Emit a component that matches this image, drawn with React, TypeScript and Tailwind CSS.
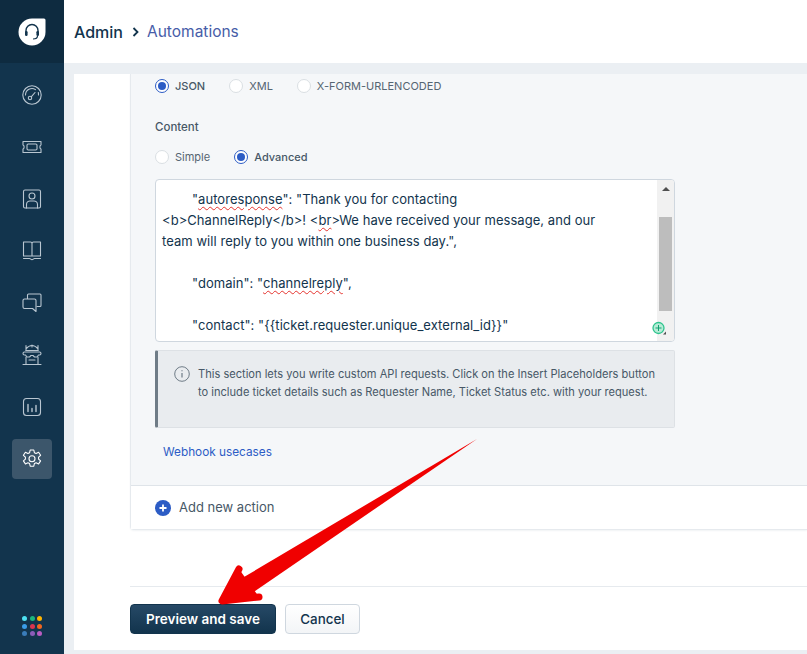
import React from "react";

const font = { fontFamily: "Inter, 'Noto Sans', sans-serif" };

function Icon({ children, light }: { children: React.ReactNode; light?: boolean }) {
  return (
    <svg width="22" height="22" viewBox="0 0 22 22" fill="none" stroke={light ? "#ffffff" : "#b9c6d1"} strokeWidth="1.1" strokeLinecap="round" strokeLinejoin="round">
      {children}
    </svg>
  );
}

const navIcons: React.ReactNode[] = [
  <Icon key="g">
    <circle cx="11" cy="11" r="9.2" />
    <path d="M4.5 11a6.5 6.5 0 0 1 10-5.4M17.3 8.5c.2.8.2 1.6.2 2.5" />
    <circle cx="9" cy="14" r="1.7" />
    <path d="M10.2 12.8l3.8-4.3" />
  </Icon>,
  <Icon key="t">
    <path d="M2 5.500h18v3.500c-1.500.4-1.500 3.600 0 4v3.500H2V13c1.500-.4 1.500-3.600 0-4z" />
    <rect x="6" y="8" width="10" height="6" rx="1.200" />
  </Icon>,
  <Icon key="c">
    <rect x="2.500" y="2" width="17" height="18" rx="1.500" />
    <circle cx="11" cy="8" r="3" />
    <path d="M5.500 20v-3.500c0-2 1.700-3.500 3.500-3.500h4c1.800 0 3.500 1.500 3.500 3.500V20" />
  </Icon>,
  <Icon key="b">
    <path d="M2.500 2h7a1.500 1.500 0 0 1 1.500 1.500V16H2.500zM19.500 2h-7A1.500 1.500 0 0 0 11 3.500V16h8.500z" />
    <path d="M2.500 18.500h6c1 0 1.500 1.200 2.500 1.200s1.500-1.200 2.500-1.200h6" />
  </Icon>,
  <Icon key="m">
    <path d="M6.500 6.500V3A1 1 0 0 1 7.500 2h11.500a1 1 0 0 1 1 1v10.500a1 1 0 0 1-1 1h-3" />
    <path d="M3.500 7h10A1.500 1.500 0 0 1 15 8.500v11l-3.500-3H3.500A1.500 1.500 0 0 1 2 15V8.500A1.500 1.500 0 0 1 3.500 7z" />
  </Icon>,
  <Icon key="h">
    <path d="M5 1.500v5M17 1.500v5M5 5c1.500-2 3.500-3.500 6-3.500S15.500 3 17 5" />
    <path d="M11 1v2M5 6.500h12" />
    <path d="M3.500 8h15c1 0 1.500.7 1.500 1.500S19.500 11 18.500 11h-1l-1.500 2h-2.500L12 11.500h-2L8.500 13H6l-1.500-2h-1C2.500 11 2 10.300 2 9.500S2.500 8 3.500 8z" />
    <path d="M5 13v7M17 13v7M8 16h6M2 20.500h18" />
  </Icon>,
  <Icon key="r">
    <rect x="2.500" y="2.500" width="17" height="17" rx="3" />
    <path d="M7 8.500v7M11 12.500v3M15 9.500v6" strokeWidth="1.400" />
  </Icon>,
  <Icon key="s" light>
    <path d="M9.200 2h3.600l.6 2.700 1.700.8 2.500-1.200 2 3-2 1.800v2l2 1.800-2 3-2.500-1.200-1.700.8-.6 2.700H9.200l-.6-2.700-1.700-.8-2.500 1.200-2-3 2-1.800v-2l-2-1.800 2-3 2.500 1.200 1.700-.8z" />
    <circle cx="11" cy="10.800" r="3" />
  </Icon>,
];

const dots = ["#4ee1f2", "#1cb67c", "#ffb400", "#3a9ce8", "#d9344f", "#f2661f", "#3a7cb9", "#8a5cb9", "#b95cc2"];

function Radio({ label, checked, strong }: { label: string; checked?: boolean; strong?: boolean }) {
  return (
    <label className="flex items-center gap-[6px] h-[14px]">
      <span className={`w-[14px] h-[14px] rounded-full bg-white flex items-center justify-center border ${checked ? "border-[#2c5cc5]" : "border-[#dadfe3]"}`}>
        {checked && <span className="w-[8px] h-[8px] rounded-full bg-[#2c5cc5]" />}
      </span>
      <span className={`text-[11px] leading-[14px] ${strong ? "font-medium text-[#475867]" : "text-[#566572]"}`}>{label}</span>
    </label>
  );
}

function Sq({ children }: { children: React.ReactNode }) {
  return <span className="underline decoration-wavy decoration-[#e5342f] decoration-1 underline-offset-[2px]">{children}</span>;
}

export default function App() {
  return (
    <div className="relative flex w-[807px] h-[654px] overflow-hidden bg-[#ebeff3]" style={font}>
      <aside className="w-16 h-full flex flex-col bg-[#12344d] shrink-0">
        <div className="h-[63px] bg-[#0e2b40] flex items-center justify-center">
          <svg width="28" height="28" viewBox="0 0 28 28">
            <path d="M14 0.500H26a1.500 1.500 0 0 1 1.500 1.500V14A13.500 13.500 0 1 1 14 0.500z" fill="#ffffff" />
            <path d="M8 15v-2.500a6 6 0 0 1 12 0V15" fill="none" stroke="#12344d" strokeWidth="1.400" />
            <rect x="7" y="13" width="2.600" height="5" rx="1.200" fill="#12344d" />
            <rect x="18.400" y="13" width="2.600" height="5" rx="1.200" fill="#12344d" />
            <path d="M19.500 18c0 2.300-2 3-4.500 3" fill="none" stroke="#12344d" strokeWidth="1.200" />
          </svg>
        </div>
        <nav className="pt-[6px] flex flex-col">
          {navIcons.map((ic, i) => (
            <div key={i} className="h-[52px] flex items-center justify-center">
              <div className={`w-10 h-10 rounded flex items-center justify-center ${i === 7 ? "bg-[#3c566b]" : ""}`}>{ic}</div>
            </div>
          ))}
        </nav>
        <div className="mt-auto mb-[18px] grid grid-cols-3 gap-x-[2.500px] gap-y-[2.500px] w-[20px] mx-auto">
          {dots.map((c) => (
            <span key={c} className="w-[5px] h-[5px] rounded-full" style={{ backgroundColor: c }} />
          ))}
        </div>
      </aside>

      <main className="flex-1 min-w-0 flex flex-col">
        <header className="h-[63px] bg-white flex items-center pl-[10px] shrink-0">
          <span className="text-[16px] font-medium text-[#12344d]">Admin</span>
          <svg className="ml-[8px] mr-[6px]" width="10" height="12" viewBox="0 0 10 12" fill="none" stroke="#12344d" strokeWidth="1.800">
            <path d="M2.500 2l4 4-4 4" />
          </svg>
          <span className="text-[15.500px] text-[#475da8]">Automations</span>
        </header>

        <div className="flex-1 min-h-0 mt-[11px] mb-[4px] ml-[10px] bg-white pl-[56px] flex flex-col">
          <div className="rounded-bl-[4px] border-l border-b border-[#e6eaee] shadow-[0_1px_2px_rgba(18,52,77,0.06)]">
            <section className="bg-[#f5f7f9] border-b border-[#dfe4e9] pl-[24px] pt-[5px] pb-[24px] h-[412px]">
              <div className="flex gap-6">
                <Radio label="JSON" checked strong />
                <Radio label="XML" />
                <Radio label="X-FORM-URLENCODED" />
              </div>
              <div className="mt-[25px] text-[11.500px] leading-[18px] font-medium text-[#475867]">Content</div>
              <div className="mt-[14px] flex gap-6">
                <Radio label="Simple" />
                <Radio label="Advanced" checked strong />
              </div>
              <div className="relative mt-[15px] w-[520px] h-[163px] rounded-[4px] border border-[#cfd7df] bg-white flex overflow-hidden">
                <div className="flex-1 pl-[6px] pt-[9px] text-[13px] tracking-[0.05px] leading-[21px] text-[#12344d]">
                  <div className="pl-[30px]">
                    "<Sq>autoresponse</Sq>": "Thank you for contacting
                  </div>
                  <div>
                    &lt;b&gt;ChannelReply&lt;/b&gt;! &lt;<Sq>br</Sq>&gt;We have received your message, and our
                  </div>
                  <div>team will reply to you within one business day.",</div>
                  <div className="h-[21px]" />
                  <div className="pl-[30px]">
                    "domain": "<Sq>channelreply</Sq>",
                  </div>
                  <div className="h-[21px]" />
                  <div className="pl-[30px]">{'"contact": "{{ticket.requester.unique_external_id}}"'}</div>
                </div>
                <div className="w-[17px] shrink-0 bg-[#f1f1f1] relative flex flex-col items-center">
                  <span className="mt-[7px] w-0 h-0 border-l-[4px] border-r-[4px] border-b-[4px] border-l-transparent border-r-transparent border-b-[#505050]" />
                  <span className="mt-[26px] w-[13px] h-[94px] bg-[#bdbdbd]" />
                </div>
                <svg className="absolute right-[7px] bottom-[6px]" width="15" height="14" viewBox="0 0 15 14">
                  <circle cx="6.500" cy="7" r="5.500" fill="#b6ecd6" stroke="#2fc48e" strokeWidth="1.300" />
                  <path d="M3.500 7h6M6.500 4v6" stroke="#12a070" strokeWidth="1" />
                  <path d="M14 10.500l-3 3h3z" fill="#505050" />
                </svg>
              </div>
              <div className="mt-[8px] w-[520px] h-[78px] rounded-[2px] bg-[#e9ecef] border border-[#dde1e5] border-l-[3px] border-l-[#6f7c87] flex pl-[16px] pt-[14px]">
                <svg className="shrink-0 mt-[1px]" width="16" height="16" viewBox="0 0 16 16" fill="none" stroke="#6f7c87" strokeWidth="1">
                  <circle cx="8" cy="8" r="7.300" />
                  <path d="M8 7v4.500M8 4.300v1" strokeWidth="1.200" />
                </svg>
                <p className="ml-[8px] w-[470px] text-[11.100px] leading-[18px] text-[#475867]">
                  This section lets you write custom API requests. Click on the Insert Placeholders button to include ticket details such as Requester Name, Ticket Status etc. with your request.
                </p>
              </div>
              <div className="mt-[15px] ml-[8px] text-[11.800px] leading-[18px] text-[#2c5cc5]">Webhook usecases</div>
            </section>
            <div className="h-[43px] pt-[1px] bg-white flex items-center pl-[24px] gap-[8px]">
              <svg width="16" height="16" viewBox="0 0 16 16">
                <circle cx="8" cy="8" r="8" fill="#2c5cc5" />
                <path d="M4.500 8h7M8 4.500v7" stroke="#ffffff" strokeWidth="1.800" />
              </svg>
              <span className="text-[13px] text-[#475867]">Add new action</span>
            </div>
          </div>

          <div className="mt-[56px] border-t border-[#e6eaee] pt-[17px] flex gap-[9px]">
            <button className="w-[146px] h-[30px] rounded-[4px] border border-[#12344d] bg-gradient-to-b from-[#264966] to-[#12344d] text-white text-[13.500px] font-semibold">
              Preview and save
            </button>
            <button className="w-[75px] h-[30px] rounded-[4px] border border-[#cfd7df] bg-gradient-to-b from-white to-[#f3f5f7] text-[#12344d] text-[13.400px] font-medium">
              Cancel
            </button>
          </div>
        </div>
      </main>

      <svg className="absolute left-0 top-0 pointer-events-none" width="807" height="654" viewBox="0 0 807 654">
        <path d="M477 439L244 577L252 593z" fill="#f00000" />
        <path d="M239 569L222 601L259 597" fill="#f00000" stroke="#f00000" strokeWidth="7" strokeLinejoin="round" strokeLinecap="round" />
        <path d="M239 569L222 601L259 597L250 588z" fill="#f00000" />
      </svg>
    </div>
  );
}
